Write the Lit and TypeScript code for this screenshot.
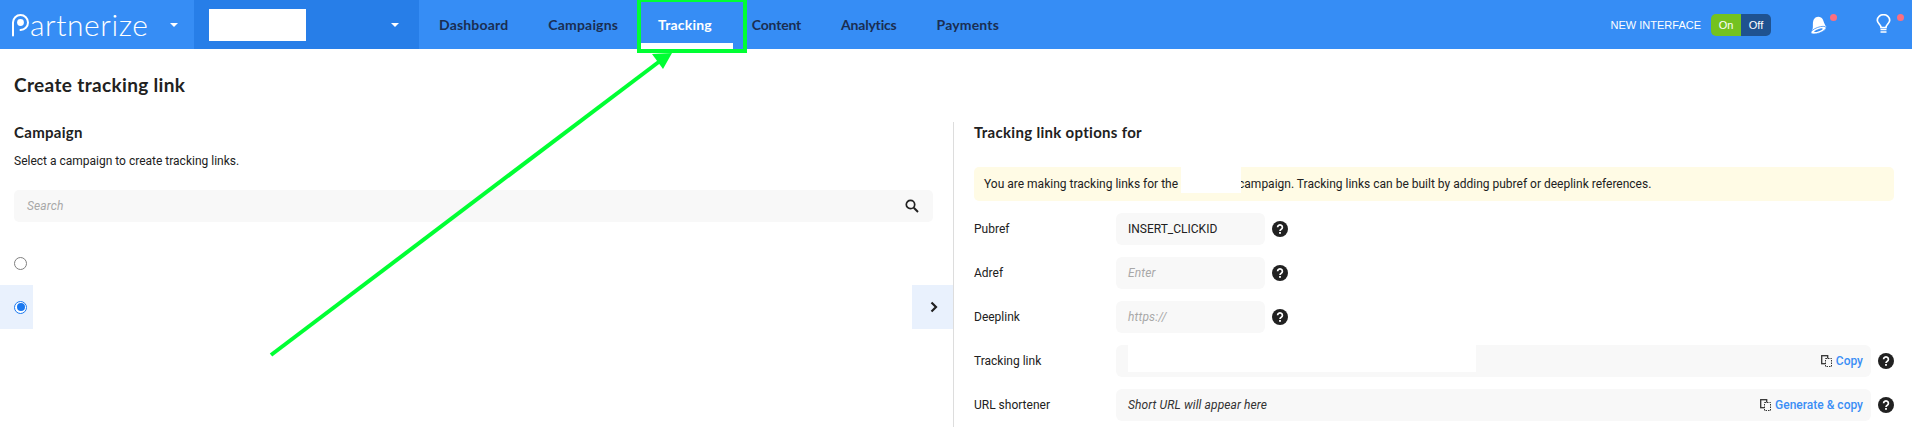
import { LitElement, html, css, svg } from "lit";
import { customElement } from "lit/decorators.js";

const help = html`<svg class="help" viewBox="0 0 16 16"><circle cx="8" cy="8" r="8" fill="#212121"/><path d="M5.6 6.2a2.4 2.3 0 1 1 3.7 2c-.9.6-1.3 1-1.3 1.8" fill="none" stroke="#fff" stroke-width="1.7"/><rect x="7.1" y="11" width="1.8" height="1.8" fill="#fff"/></svg>`;
const copy = html`<svg class="copy" viewBox="0 0 11 12"><rect x=".7" y=".7" width="6" height="8" fill="#f8f8f8" stroke="#333" stroke-width="1.3"/><rect x="4.5" y="3.5" width="6" height="8" fill="#f8f8f8" stroke="#333" stroke-dasharray="1.5 1"/></svg>`;
const caret = svg`<path d="M0 0h8L4 4z" fill="#fff"/>`;

@customElement("app-root")
export class AppRoot extends LitElement {
  static styles = css`
    :host { display: block; width: 1912px; height: 427px; overflow: hidden; position: relative; background: #fff; font-family: Roboto, sans-serif; font-size: 12px; color: #212121; }
    * { box-sizing: border-box; }
    .nav { display: flex; align-items: center; height: 49px; background: #368df5; }
    .brand { width: 194px; flex: none; display: flex; align-items: center; padding-left: 11px; }
    .mark { width: 19px; height: 24px; flex: none; }
    .logo { font-family: "Lato", sans-serif; font-weight: 300; font-size: 30px; letter-spacing: .55px; color: #fff; line-height: 1; margin-top: -1px; }
    .caret { width: 8px; height: 4px; flex: none; }
    .brand .caret { margin-left: 22px; }
    .account { width: 225px; height: 49px; flex: none; background: #277ee8; display: flex; align-items: center; justify-content: space-between; padding: 0 20px 0 15px; }
    .blank { width: 97px; height: 32px; background: #fff; }
    .links { display: flex; margin-left: 20px; }
    .link { font-family: Lato, sans-serif; font-weight: 700; font-size: 14px; letter-spacing: .18px; color: #1a2e52; line-height: 49px; margin-right: 40px; }
    .link.on { color: #fff; }
    .link.narrow { letter-spacing: -.2px; }
    .right { margin-left: auto; display: flex; align-items: center; }
    .ni { font-family: "Liberation Sans", sans-serif; font-size: 11px; color: #fff; }
    .toggle { display: flex; margin-left: 10px; width: 60px; height: 22px; border-radius: 5px; overflow: hidden; font-family: "Liberation Sans", sans-serif; font-size: 11px; color: #fff; line-height: 22px; text-align: center; }
    .toggle span { flex: 1; }
    .toggle .a { background: #74c21f; }
    .toggle .b { background: #1f5290; }
    .ic { position: relative; display: block; flex: none; }
    .bell { width: 18px; height: 18px; margin-left: 39px; }
    .bulb { width: 15px; height: 19px; margin: -3px 21px 0 48px; }
    .dot { position: absolute; width: 7px; height: 7px; border-radius: 50%; background: #fb6f80; }
    .dot.d1 { left: 20px; top: -2px; }
    .dot.d2 { left: 21px; top: 0; }
    .main { display: flex; flex-direction: column; padding-top: 25px; }
    h1 { margin: 0 0 0 14px; font-family: Lato, sans-serif; font-weight: 700; font-size: 19px; letter-spacing: .35px; line-height: 22px; color: #212121; }
    .cols { display: flex; margin-top: 26px; }
    .left { width: 954px; flex: none; height: 305px; border-right: 1px solid #ddd; }
    h2 { margin: 0; font-family: Lato, sans-serif; font-weight: 700; font-size: 15px; letter-spacing: .3px; line-height: 20px; color: #212121; }
    .left h2 { margin: 0 0 0 14px; }
    .sub { margin: 11px 0 0 14px; line-height: 16px; }
    .search { margin: 21px 20px 0 14px; height: 32px; background: #f8f8f8; border-radius: 5px; display: flex; align-items: center; justify-content: space-between; padding: 0 14px 0 13px; }
    .ph { font-style: italic; color: #a8a8a8; letter-spacing: .12px; }
    .sicon { width: 14px; height: 14px; }
    .opt { display: flex; height: 44px; align-items: center; justify-content: space-between; }
    .opts { margin-top: 19px; }
    .cell { width: 33px; height: 44px; display: flex; align-items: center; padding-left: 14px; }
    .radio { width: 13px; height: 13px; border-radius: 50%; border: 1px solid #808080; background: #fff; }
    .radio.sel { border-color: #1a78f0; display: flex; align-items: center; justify-content: center; }
    .radio.sel::after { content: ""; width: 8px; height: 8px; border-radius: 50%; background: #1a78f0; }
    .sel-row .cell { background: #e9f1fd; }
    .go { width: 41px; height: 44px; background: #e9f1fd; display: flex; align-items: center; justify-content: center; padding-left: 2px; }
    .go svg { width: 8px; height: 12px; }
    .rightc { flex: 1; padding: 0 18px 0 20px; }
    .notice { position: relative; margin-top: 25px; height: 34px; background: #fffbe5; border-radius: 5px; padding: 0 10px; line-height: 34px; white-space: nowrap; color: #212121; }
    .gap { display: inline-block; width: 57px; }
    .mask { position: absolute; left: 207px; top: 0; width: 60px; height: 26px; background: #fff; }
    .rows { margin-top: 12px; display: flex; flex-direction: column; gap: 12px; }
    .row { display: flex; align-items: center; height: 32px; }
    .lab { width: 142px; flex: none; }
    .inp { position: relative; height: 32px; width: 149px; background: #f8f8f8; border-radius: 6px; display: flex; align-items: center; padding: 0 12px; }
    .inp.wide { width: 755px; }
    .help { width: 16px; height: 16px; margin-left: 7px; flex: none; }
    .end { margin-left: auto; display: flex; align-items: center; gap: 4px; color: #3a8ef5; font-weight: 500; margin-right: -4px; }
    .copy { width: 11px; height: 12px; }
    .url { font-style: italic; color: #333; letter-spacing: .1px; }
    .linkmask { position: absolute; left: 12px; top: -2px; width: 348px; height: 29px; background: #fff; }
    .anno { position: absolute; left: 0; top: 0; width: 1912px; height: 427px; pointer-events: none; }
    .under { position: absolute; left: 641px; top: 43px; width: 92px; height: 6px; background: #fff; }
  `;

  render() {
    return html`
      <div class="nav">
        <div class="brand">
          <svg class="mark" viewBox="0 0 19 24"><path d="M2 22.500V9.500a7.500 7.500 0 1 1 7.500 7.500" fill="none" stroke="#fff" stroke-width="2" stroke-linecap="round"/><circle cx="9.500" cy="9.500" r="3.400" fill="#fff"/></svg>
          <span class="logo">artnerize</span>
          <svg class="caret" viewBox="0 0 8 4">${caret}</svg>
        </div>
        <div class="account"><div class="blank"></div><svg class="caret" viewBox="0 0 8 4">${caret}</svg></div>
        <div class="links">
          <span class="link">Dashboard</span>
          <span class="link">Campaigns</span>
          <span class="link on">Tracking</span>
          <span class="link narrow">Content</span>
          <span class="link narrow">Analytics</span>
          <span class="link">Payments</span>
        </div>
        <div class="right">
          <span class="ni">NEW INTERFACE</span>
          <div class="toggle"><span class="a">On</span><span class="b">Off</span></div>
          <div class="ic bell">
            <svg viewBox="0 0 18 18" width="18" height="18"><path d="M1.500 15.500C4 12 2 8 3.500 4c1.200-3 5-4.200 7.500-2.500 3 2 2.500 6 5.500 9.500z" fill="#fff"/><ellipse cx="8.500" cy="14.200" rx="8" ry="2.900" transform="rotate(-20 8.500 14.200)" fill="#fff" stroke="#368df5" stroke-width=".7"/><ellipse cx="8.500" cy="14.200" rx="4.500" ry="1" transform="rotate(-20 8.500 14.200)" fill="#368df5"/></svg>
            <span class="dot d1"></span>
          </div>
          <div class="ic bulb">
            <svg viewBox="0 0 15 19" width="15" height="19"><path d="M5 13.500c0-3-3.700-4-3.700-7.300a6.200 5.500 0 0 1 12.400 0C13.700 9.500 10 10.500 10 13.500z" fill="none" stroke="#fff" stroke-width="1.700"/><path d="M4.500 15.500h6M4.500 18h6" stroke="#fff" stroke-width="1.400"/></svg>
            <span class="dot d2"></span>
          </div>
        </div>
      </div>
      <div class="main">
        <h1>Create tracking link</h1>
        <div class="cols">
          <div class="left">
            <h2>Campaign</h2>
            <p class="sub">Select a campaign to create tracking links.</p>
            <div class="search"><span class="ph">Search</span>
              <svg class="sicon" viewBox="0 0 14 14"><circle cx="5.500" cy="5.500" r="4.200" fill="none" stroke="#212121" stroke-width="1.700"/><path d="M8.800 8.800L13 13" stroke="#212121" stroke-width="2"/></svg>
            </div>
            <div class="opts">
              <div class="opt"><div class="cell-plain cell"><span class="radio"></span></div></div>
              <div class="opt sel-row"><div class="cell"><span class="radio sel"></span></div>
                <div class="go"><svg viewBox="0 0 8 12"><path d="M1.500 1.500L6 6l-4.500 4.500" fill="none" stroke="#212121" stroke-width="2.200"/></svg></div>
              </div>
            </div>
          </div>
          <div class="rightc">
            <h2>Tracking link options for</h2>
            <div class="notice">You are making tracking links for the <span class="gap"></span>campaign. Tracking links can be built by adding pubref or deeplink references.<span class="mask"></span></div>
            <div class="rows">
              <div class="row"><span class="lab">Pubref</span><div class="inp">INSERT_CLICKID</div>${help}</div>
              <div class="row"><span class="lab">Adref</span><div class="inp ph">Enter</div>${help}</div>
              <div class="row"><span class="lab">Deeplink</span><div class="inp ph">https://</div>${help}</div>
              <div class="row"><span class="lab">Tracking link</span><div class="inp wide"><span class="linkmask"></span><span class="end">${copy}Copy</span></div>${help}</div>
              <div class="row"><span class="lab">URL shortener</span><div class="inp wide"><span class="url">Short URL will appear here</span><span class="end">${copy}Generate &amp; copy</span></div>${help}</div>
            </div>
          </div>
        </div>
      </div>
      <span class="under"></span>
      <svg class="anno" viewBox="0 0 1912 427">
        <rect x="639" y="0" width="106" height="51" fill="none" stroke="#00ff33" stroke-width="4"/>
        <path d="M271 355L660 61" stroke="#00ff33" stroke-width="4" fill="none"/>
        <path d="M672 53L652 54L663 69z" fill="#00ff33"/>
      </svg>
    `;
  }
}
